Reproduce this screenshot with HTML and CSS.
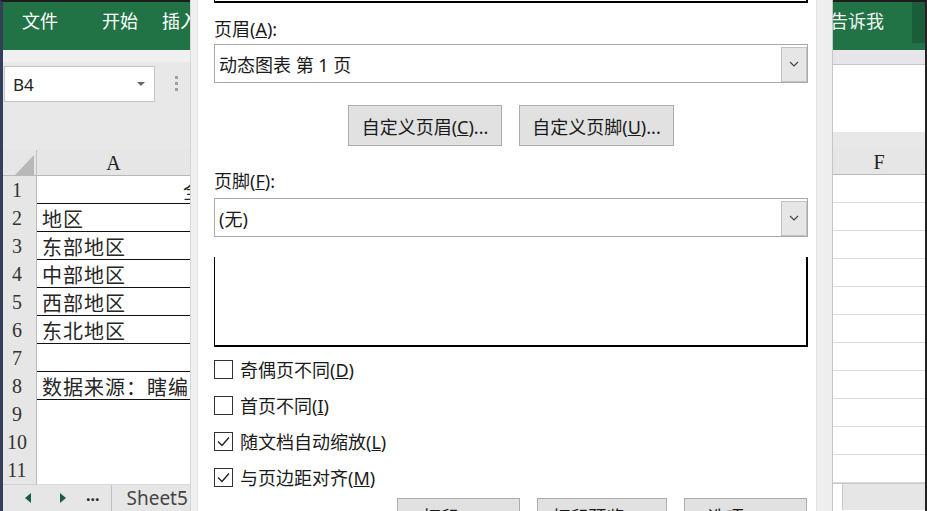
FILE: index.html
```html
<!DOCTYPE html>
<html lang="zh-CN">
<head>
  <meta charset="UTF-8" />
  <title>页面设置 - 页眉/页脚</title>
  <link rel="stylesheet" href="styles.css">
</head>
<body>
<div class="screen">

  <!-- Excel, left of the dialog -->
  <div class="sheet-left">
    <div class="ribbon">
      <span class="tab">文件</span>
      <span class="tab">开始</span>
      <span class="tab">插入</span>
    </div>
    <div class="toolbar">
      <div class="namebox"><span>B4</span><span class="nb-arrow"></span></div>
      <div class="dots"><i></i><i></i><i></i></div>
    </div>
    <div class="hrow">
      <div class="corner"><span></span></div>
      <div class="colhead">A</div>
    </div>
    <div class="row"><div class="rh">1</div><div class="cell b"><span class="title">全</span></div></div>
    <div class="row"><div class="rh">2</div><div class="cell b">地区</div></div>
    <div class="row"><div class="rh">3</div><div class="cell b">东部地区</div></div>
    <div class="row"><div class="rh">4</div><div class="cell b">中部地区</div></div>
    <div class="row"><div class="rh">5</div><div class="cell b">西部地区</div></div>
    <div class="row"><div class="rh">6</div><div class="cell b">东北地区</div></div>
    <div class="row"><div class="rh">7</div><div class="cell b"></div></div>
    <div class="row"><div class="rh">8</div><div class="cell b">数据来源：瞎编</div></div>
    <div class="row"><div class="rh">9</div><div class="cell"></div></div>
    <div class="row"><div class="rh">10</div><div class="cell"></div></div>
    <div class="row"><div class="rh">11</div><div class="cell"></div></div>
    <div class="tabsbar">
      <span class="tri left"></span>
      <span class="tri right"></span>
      <span class="more">...</span>
      <span class="divider"></span>
      <span class="sheetname">Sheet5</span>
    </div>
  </div>

  <!-- Page setup dialog, header / footer tab -->
  <div class="dialog">
    <div class="frame-l"></div>
    <div class="dlg-body">
      <div class="preview-end"></div>

      <div class="label first">页眉(<u>A</u>):</div>
      <div class="combo">
        <span class="combo-text">动态图表 第 1 页</span>
        <span class="combo-btn">
          <svg width="10" height="6" viewBox="0 0 10 6"><polyline points="1,1 5,5 9,1" fill="none" stroke="#444" stroke-width="1.2"/></svg>
        </span>
      </div>

      <div class="btnrow">
        <button class="btn w154">自定义页眉(<u>C</u>)...</button>
        <button class="btn w155">自定义页脚(<u>U</u>)...</button>
      </div>

      <div class="label second">页脚(<u>F</u>):</div>
      <div class="combo">
        <span class="combo-text">(无)</span>
        <span class="combo-btn">
          <svg width="10" height="6" viewBox="0 0 10 6"><polyline points="1,1 5,5 9,1" fill="none" stroke="#444" stroke-width="1.2"/></svg>
        </span>
      </div>

      <div class="preview"></div>

      <div class="checks">
        <div class="check"><span class="box"></span><span>奇偶页不同(<u>D</u>)</span></div>
        <div class="check"><span class="box"></span><span>首页不同(<u>I</u>)</span></div>
        <div class="check"><span class="box"><svg width="17" height="17" viewBox="0 0 17 17"><polyline points="3,8.5 7,12.5 14,4.5" fill="none" stroke="#222" stroke-width="1.4"/></svg></span><span>随文档自动缩放(<u>L</u>)</span></div>
        <div class="check"><span class="box"><svg width="17" height="17" viewBox="0 0 17 17"><polyline points="3,8.5 7,12.5 14,4.5" fill="none" stroke="#222" stroke-width="1.4"/></svg></span><span>与页边距对齐(<u>M</u>)</span></div>
      </div>

      <div class="btnrow bottom">
        <button class="btn w123">打印(<u>P</u>)...</button>
        <button class="btn w130">打印预览(<u>W</u>)</button>
        <button class="btn w123">选项(<u>O</u>)...</button>
      </div>
    </div>
    <div class="frame-r"></div>
  </div>

  <!-- Excel, right of the dialog -->
  <div class="sheet-right">
    <div class="ribbon-r">
      <span class="tell">告诉我</span>
      <span class="share"></span>
    </div>
    <div class="band"></div>
    <div class="formula"></div>
    <div class="gap"></div>
    <div class="colhead-r">F</div>
    <div class="rrow"></div>
    <div class="rrow"></div>
    <div class="rrow"></div>
    <div class="rrow"></div>
    <div class="rrow"></div>
    <div class="rrow"></div>
    <div class="rrow"></div>
    <div class="rrow"></div>
    <div class="rrow"></div>
    <div class="rrow"></div>
    <div class="rrow"></div>
    <div class="tabsbar-r"><span class="scroll-end"></span></div>
  </div>

</div>
</body>
</html>
```

FILE: styles.css
```css
* {
  margin: 0;
  padding: 0;
  box-sizing: border-box;
}
body {
  width: 927px;
  height: 511px;
  overflow: hidden;
  background: #ffffff;
  font-family: "Noto Sans CJK SC", "Noto Sans", sans-serif;
  color: #111;
}
.screen {
  display: grid;
  grid-template-columns: 190px 643px 94px;
  height: 511px;
  overflow: hidden;
}

/* Excel left */
.sheet-left {
  border-top: 2px solid #1c1c1c;
  border-left: 3px solid #34405a;
  overflow: hidden;
  background: #e8e8e8;
}
.ribbon {
  height: 48px;
  background: #217346;
  display: flex;
  padding: 6px 0 0 19px;
  white-space: nowrap;
}
.tab {
  color: #ffffff;
  font-size: 18px;
  line-height: 24px;
  margin-right: 24px;
}
.tab:first-child {
  margin-right: 44px;
}
.toolbar {
  height: 100px;
  background: linear-gradient(#f0f0f0 0, #f0f0f0 12px, #e8e8e8 12px);
  display: flex;
  align-items: flex-start;
  padding-top: 16px;
}
.namebox {
  width: 151px;
  height: 36px;
  margin-left: 1px;
  background: #ffffff;
  border: 1px solid #c6c6c6;
  display: flex;
  align-items: center;
  justify-content: space-between;
  padding: 0 9px 0 8px;
  font-family: "Noto Sans", sans-serif;
  font-size: 17px;
  color: #222;
}
.nb-arrow {
  width: 0;
  height: 0;
  border-left: 4px solid transparent;
  border-right: 4px solid transparent;
  border-top: 4px solid #666;
}
.dots {
  display: flex;
  flex-direction: column;
  gap: 3px;
  margin: 10px 0 0 20px;
}
.dots i {
  width: 3px;
  height: 3px;
  background: #a0a0a0;
}
.hrow {
  height: 26px;
  display: grid;
  grid-template-columns: 34px 1fr;
  background: #e6e6e6;
  border-bottom: 1px solid #b8b8b8;
}
.corner {
  border-right: 1px solid #c2c2c2;
  display: flex;
  justify-content: flex-end;
  align-items: flex-end;
  padding: 0 2px 1px 0;
}
.corner span {
  width: 19px;
  height: 20px;
  background: #b8b8b8;
  clip-path: polygon(100% 0, 100% 100%, 0 100%);
}
.colhead {
  font-family: "Liberation Serif", serif;
  font-size: 20px;
  line-height: 26px;
  text-align: center;
  color: #222;
}
.row {
  height: 28px;
  display: grid;
  grid-template-columns: 34px 1fr;
}
.rh {
  background: #e6e6e6;
  border-right: 1px solid #bcbcbc;
  border-bottom: 1px solid #d2d2d2;
  font-family: "Liberation Serif", serif;
  font-size: 20px;
  line-height: 28px;
  text-align: center;
  padding-right: 5px;
  color: #333;
}
.cell {
  background: #ffffff;
  border-bottom: 1px solid #dadada;
  font-size: 20px;
  letter-spacing: 1px;
  line-height: 29px;
  padding-left: 5px;
  white-space: nowrap;
  overflow: hidden;
  color: #262626;
}
.cell.b {
  border-bottom: 2px solid #111;
}
.title {
  margin-left: 141px;
}
.tabsbar {
  height: 27px;
  background: #e6e6e6;
  border-top: 1px solid #c8c8c8;
  display: flex;
  align-items: center;
  white-space: nowrap;
}
.tri {
  width: 0;
  height: 0;
  border-top: 5px solid transparent;
  border-bottom: 5px solid transparent;
}
.tri.left {
  border-right: 6px solid #1d5c44;
  margin-left: 22px;
}
.tri.right {
  border-left: 6px solid #1d5c44;
  margin-left: 29px;
}
.more {
  margin-left: 20px;
  font-family: "Noto Sans", sans-serif;
  font-size: 16px;
  font-weight: bold;
  color: #2b2b2b;
  line-height: 16px;
  padding-bottom: 6px;
}
.divider {
  width: 1px;
  height: 26px;
  background: #c0c0c0;
  margin-left: 11px;
}
.sheetname {
  margin-left: 15px;
  font-family: "Noto Sans", sans-serif;
  font-size: 19px;
  color: #444;
}

/* Dialog */
.dialog {
  display: grid;
  grid-template-columns: 8px 1fr 17px;
  height: 511px;
}
.frame-l {
  background: #f0f0f0;
  border-left: 1px solid #d6d6d6;
  border-right: 1px solid #e2e2e2;
}
.frame-r {
  background: #eeeeee;
  border-left: 1px solid #e4e4e4;
  border-right: 1px solid #c6c6c6;
}
.dlg-body {
  background: #ffffff;
  padding: 0 8px 0 16px;
  overflow: hidden;
  font-family: "Noto Sans", "Noto Sans CJK SC", sans-serif;
  font-size: 18px;
  color: #1a1a1a;
}
.preview-end {
  height: 3px;
  border-left: 1px solid #000;
  border-right: 2px solid #000;
  border-bottom: 2px solid #000;
}
.label {
  line-height: 22px;
}
.label.first {
  margin-top: 15px;
}
.label.second {
  margin-top: 24px;
}
.combo {
  height: 39px;
  margin-top: 4px;
  border: 1px solid #a9a9a9;
  display: flex;
  align-items: center;
  padding: 0 0 0 4px;
}
.label.second + .combo {
  margin-top: 6px;
}
.combo-text {
  flex: 1;
}
.combo-btn {
  width: 26px;
  height: 35px;
  margin-top: 1px;
  background: #e6e6e6;
  border: 1px solid #c2c2c2;
  display: flex;
  align-items: center;
  justify-content: center;
}
.btnrow {
  display: flex;
  justify-content: center;
  gap: 17px;
  margin-top: 22px;
}
.btnrow.bottom {
  justify-content: flex-end;
  margin-top: 3px;
  padding-right: 1px;
}
.btn {
  height: 41px;
  background: #e1e1e1;
  border: 1px solid #adadad;
  font-family: inherit;
  font-size: 18px;
  color: #1a1a1a;
  white-space: nowrap;
}
.btnrow.bottom .btn {
  padding-bottom: 5px;
}
.w154 { width: 154px; }
.w155 { width: 155px; }
.w123 { width: 123px; }
.w130 { width: 130px; }
.preview {
  height: 90px;
  margin-top: 20px;
  border-left: 1px solid #000;
  border-right: 2px solid #000;
  border-bottom: 2px solid #000;
}
.checks {
  margin-top: 4px;
}
.check {
  height: 36px;
  display: flex;
  align-items: center;
  gap: 7px;
}
.box {
  width: 19px;
  height: 19px;
  border: 1px solid #333;
  background: #fff;
  display: flex;
  align-items: center;
  justify-content: center;
}

/* Excel right */
.sheet-right {
  border-top: 2px solid #1c1c1c;
  border-right: 2px solid #222;
  overflow: hidden;
  background: #ffffff;
}
.ribbon-r {
  height: 48px;
  background: #217346;
  display: flex;
  justify-content: space-between;
  align-items: flex-start;
  white-space: nowrap;
}
.tell {
  color: #f2f2f2;
  font-size: 18px;
  line-height: 24px;
  margin: 6px 0 0 -3px;
}
.share {
  width: 13px;
  height: 41px;
  background: #1a5d39;
}
.band {
  height: 15px;
  background: #e8e5ea;
  border-bottom: 1px solid #c6c6c6;
}
.formula {
  height: 67px;
  background: #ffffff;
}
.gap {
  height: 17px;
  background: #e8e8e8;
}
.colhead-r {
  height: 26px;
  background: #e6e6e6;
  border-bottom: 1px solid #b8b8b8;
  font-family: "Liberation Serif", serif;
  font-size: 20px;
  line-height: 26px;
  text-align: center;
  color: #222;
}
.rrow {
  height: 28px;
  border-bottom: 1px solid #dadada;
}
.tabsbar-r {
  height: 27px;
  background: #e6e6e6;
  border-top: 1px solid #c8c8c8;
  display: flex;
}
.scroll-end {
  width: 10px;
  background: #ffffff;
  border-right: 1px solid #c8c8c8;
}
```
